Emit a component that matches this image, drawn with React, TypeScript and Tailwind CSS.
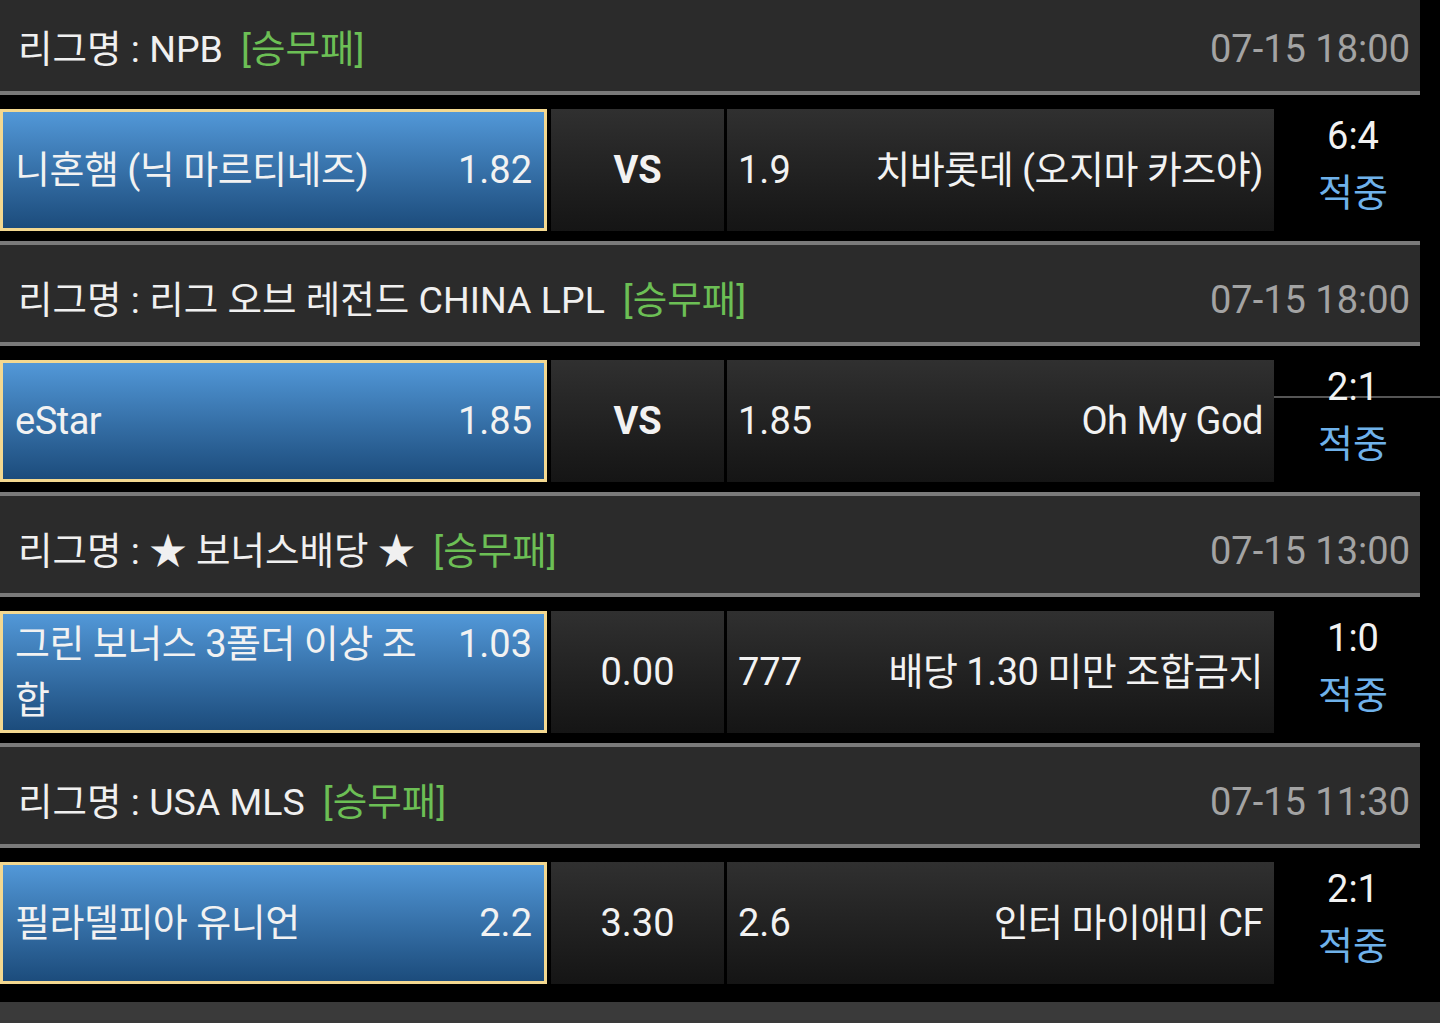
const games = [
  {
    league: "NPB",
    date: "07-15 18:00",
    home: "니혼햄 (닉 마르티네즈)",
    homeOdds: "1.82",
    mid: "VS",
    awayOdds: "1.9",
    away: "치바롯데 (오지마 카즈야)",
    score: "6:4",
    strike: false,
  },
  {
    league: "리그 오브 레전드 CHINA LPL",
    date: "07-15 18:00",
    home: "eStar",
    homeOdds: "1.85",
    mid: "VS",
    awayOdds: "1.85",
    away: "Oh My God",
    score: "2:1",
    strike: true,
  },
  {
    league: "★ 보너스배당 ★",
    date: "07-15 13:00",
    home: "그린 보너스 3폴더 이상 조합",
    homeOdds: "1.03",
    mid: "0.00",
    awayOdds: "777",
    away: "배당 1.30 미만 조합금지",
    score: "1:0",
    strike: false,
  },
  {
    league: "USA MLS",
    date: "07-15 11:30",
    home: "필라델피아 유니언",
    homeOdds: "2.2",
    mid: "3.30",
    awayOdds: "2.6",
    away: "인터 마이애미 CF",
    score: "2:1",
    strike: false,
  },
];

type Game = (typeof games)[number];

const Block = ({ game }: { game: Game }) => {
  return (
    <div>
      <div className="h-[4px] w-[1420px] bg-[#7a7a7a]" />
      <div className="w-[1420px] h-[97px] bg-[#2b2b2b] flex items-center justify-between pl-[18px] pr-[10px] pt-[13px]">
        <div className="text-[37.5px] text-[#f0f0f0] whitespace-nowrap">
          리그명 : {game.league}
          <span className="ml-[18px] text-[#6cbf55]">[승무패]</span>
        </div>
        <div className="text-[38px] text-[#a3a3a3]">{game.date}</div>
      </div>
      <div className="h-[4px] w-[1420px] bg-[#7a7a7a]" />
      <div className="pt-[14px] pb-[10px] flex text-[38px] text-[#f2f2f2]">
        <div className="w-[547px] h-[122px] border-[3px] border-[#f3d890] bg-gradient-to-b from-[#5298d8] to-[#1c4c7c] flex items-center pl-[12px] pr-[12px]">
          <div className="flex items-start w-full leading-[56px]">
            <div className="flex-1 mr-[24px] tracking-[-0.5px]">{game.home}</div>
            <div>{game.homeOdds}</div>
          </div>
        </div>
        <div className="ml-[4px] w-[173px] h-[122px] bg-gradient-to-b from-[#303030] to-[#151515] flex items-center justify-center">
          <span className={game.mid === "VS" ? "font-bold" : ""}>{game.mid}</span>
        </div>
        <div className="ml-[3px] w-[547px] h-[122px] bg-gradient-to-b from-[#303030] to-[#151515] flex items-center justify-between pl-[11px] pr-[11px]">
          <span>{game.awayOdds}</span>
          <span className="tracking-[-0.5px]">{game.away}</span>
        </div>
        <div className="relative w-[158px] h-[122px] flex flex-col items-center justify-center pb-[10px] leading-[57px]">
          {game.strike && (
            <div className="absolute left-0 right-[-8px] top-[36px] h-[2px] bg-[#555555]" />
          )}
          <span className="relative">{game.score}</span>
          <span className="relative text-[#6fb1ea]">적중</span>
        </div>
      </div>
    </div>
  );
};

export default function App() {
  return (
    <div className="min-h-screen bg-black overflow-hidden font-[Roboto,'Noto_Sans_CJK_KR',sans-serif]">
      <div className="-mt-[10px]">
        {games.map((game) => (
          <Block key={game.home} game={game} />
        ))}
      </div>
      <div className="mt-[8px] h-[40px] bg-[#3a3a3a]" />
    </div>
  );
}
